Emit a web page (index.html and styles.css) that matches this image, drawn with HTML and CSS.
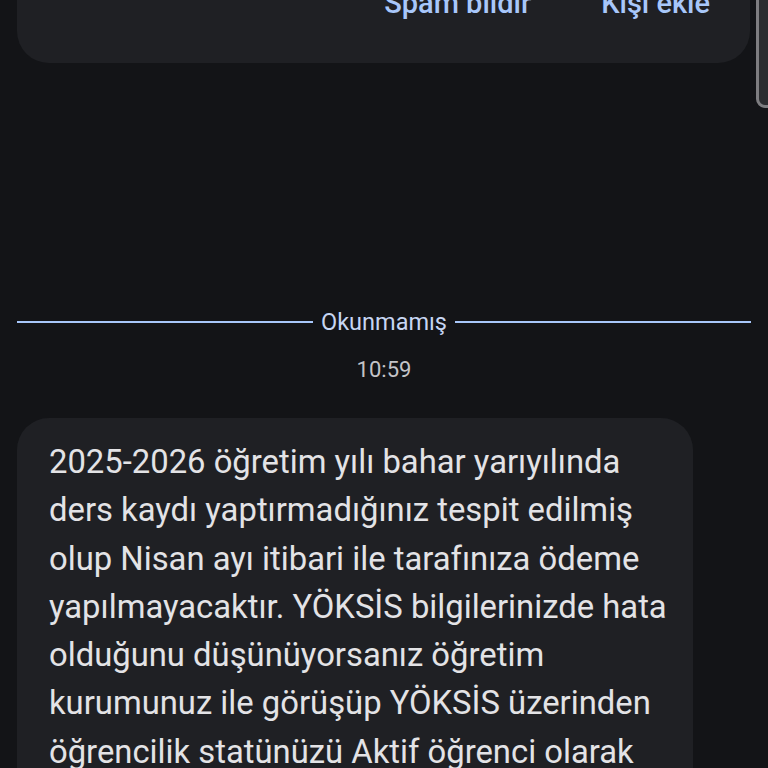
FILE: index.html
```html
<!DOCTYPE html>
<html lang="tr">
<head>
<meta charset="utf-8">
<link rel="stylesheet" href="styles.css">
</head>
<body>
<div class="screen">
  <div class="top-card">
    <span class="action">Spam bildir</span>
    <span class="action">Kişi ekle</span>
  </div>
  <div class="divider">
    <span class="line"></span>
    <span class="divider-label">Okunmamış</span>
    <span class="line"></span>
  </div>
  <div class="time">10:59</div>
  <div class="bubble">2025-2026 öğretim yılı bahar yarıyılında ders kaydı yaptırmadığınız tespit edilmiş olup Nisan ayı itibari ile tarafınıza ödeme yapılmayacaktır. YÖKSİS bilgilerinizde hata olduğunu düşünüyorsanız öğretim kurumunuz ile görüşüp YÖKSİS üzerinden öğrencilik statünüzü Aktif öğrenci olarak güncellemeniz gerekmektedir.</div>
  <div class="scroll-thumb"></div>
</div>
</body>
</html>
```

FILE: styles.css
```css
html, body {
  margin: 0;
  padding: 0;
  background: #131417;
}
.screen {
  position: relative;
  width: 768px;
  height: 768px;
  overflow: hidden;
  font-family: Roboto, "Noto Sans", sans-serif;
  display: flex;
  flex-direction: column;
}
.screen > * {
  flex-shrink: 0;
}
.top-card {
  margin: -40px 18px 0 17px;
  height: 103px;
  background: #1f2024;
  border-radius: 0 0 32px 32px;
  display: flex;
  justify-content: flex-end;
  gap: 70px;
  padding: 0 40px 0 0;
  box-sizing: border-box;
}
.action {
  color: #a8c7fa;
  font-size: 29px;
  line-height: 34px;
  margin-top: 26px;
  font-weight: 500;
}
.divider {
  margin: 244px 17px 0 17px;
  display: flex;
  align-items: center;
  gap: 8px;
  height: 30px;
}
.line {
  flex: 1;
  height: 2px;
  background: #a8c7fa;
}
.divider-label {
  color: #c7d6f3;
  font-size: 23.5px;
  line-height: 30px;
}
.time {
  margin-top: 18px;
  text-align: center;
  color: #c4c4c8;
  font-size: 22px;
  line-height: 30px;
}
.bubble {
  margin: 33px 0 0 17px;
  width: 676px;
  box-sizing: border-box;
  background: #1f2024;
  border-radius: 32px;
  padding: 20px 16px 30px 32px;
  color: #e3e3e6;
  font-size: 32.8px;
  line-height: 48.3px;
}
.scroll-thumb {
  position: absolute;
  top: -12px;
  right: -8px;
  width: 14px;
  height: 114px;
  border: 3px solid #7d7d80;
  border-radius: 9px;
  background: #2b2c2f;
}
```
